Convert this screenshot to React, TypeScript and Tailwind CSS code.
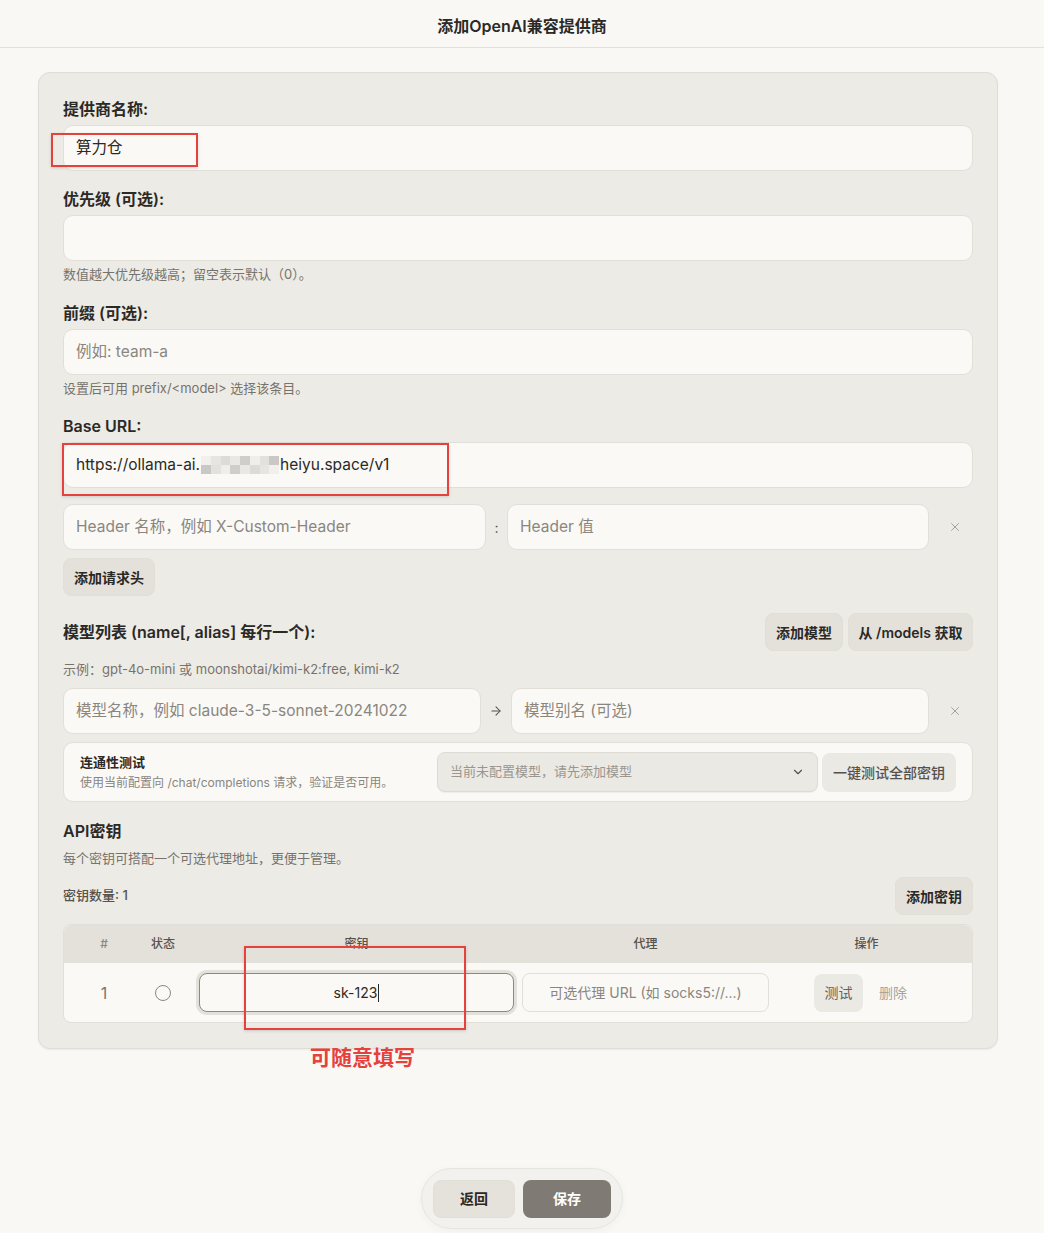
import { ArrowRight, ChevronDown, X } from "lucide-react";
import clsx from "clsx";

const cn = clsx;
const font = "font-['Inter','Noto_Sans_CJK_SC',sans-serif]";

function Label({ children, className }: { children: React.ReactNode; className?: string }) {
  return (
    <div className={cn("text-[16px] leading-[24px] font-semibold text-[#2b2925]", className)}>
      {children}
    </div>
  );
}

function Hint({ children, className }: { children: React.ReactNode; className?: string }) {
  return <div className={cn("text-[13px] leading-[16px] text-[#77736c]", className)}>{children}</div>;
}

function Input({
  value,
  placeholder,
  className,
  children,
}: {
  value?: React.ReactNode;
  placeholder?: string;
  className?: string;
  children?: React.ReactNode;
}) {
  return (
    <div
      className={cn(
        "relative flex h-[46px] items-center rounded-[10px] border border-[#e2dfd9] bg-[#faf9f6] px-[12px] text-[15.5px]",
        className
      )}
    >
      {value ? (
        <span className="text-[#2b2925]">{value}</span>
      ) : (
        <span className="text-[#8a867f]">{placeholder}</span>
      )}
      {children}
    </div>
  );
}

function SoftButton({ children, className }: { children: React.ReactNode; className?: string }) {
  return (
    <button
      className={cn(
        "flex h-[38px] items-center justify-center whitespace-nowrap rounded-[8px] border border-[#e2dfd9] bg-[#e4e1db] text-[14px] font-semibold text-[#2b2925]",
        className
      )}
    >
      {children}
    </button>
  );
}

// red outline used to call out a field
function Callout({ className }: { className: string }) {
  return <div className={cn("pointer-events-none absolute border-2 border-[#e5413d] shadow-[0_1px_3px_rgba(0,0,0,0.15)]", className)} />;
}

function Redacted() {
  const cells = ["#f1f0ed", "#e6e5e2", "#dcdbd8", "#e9e8e5", "#cfcecb", "#efeeeb", "#e2e1de", "#c9c8c5"];
  return (
    <span className="mx-[1px] inline-flex h-[18px] w-[78px] flex-wrap overflow-hidden align-middle">
      {cells.map((c, i) => (
        <span key={i} className="h-[9px] w-[9.75px]" style={{ background: c }} />
      ))}
      {cells
        .slice()
        .reverse()
        .map((c, i) => (
          <span key={"b" + i} className="h-[9px] w-[9.75px]" style={{ background: c }} />
        ))}
    </span>
  );
}

export default function App() {
  return (
    <div className={cn("min-h-[1233px] bg-[#f9f8f5] pb-[150px]", font)}>
      <header className="flex h-[48px] items-center justify-center border-b border-[#e3e1dc] pt-[4px] text-[16px] font-semibold text-[#2b2925]">
        添加OpenAI兼容提供商
      </header>

      <div className="ml-[38px] mt-[24px] w-[960px] rounded-[12px] border border-[#e0ddd7] bg-[#edebe6] px-[24px] pt-[24px] pb-[25px] shadow-[0_1px_2px_rgba(0,0,0,0.06)]">
        <Label>提供商名称:</Label>
        <Input value="算力仓" className="mt-[4px]">
          <Callout className="left-[-13px] top-[7px] h-[34px] w-[147px]" />
        </Input>

        <Label className="mt-[16px]">优先级 (可选):</Label>
        <Input className="mt-[4px]" />
        <Hint className="mt-[5px]">数值越大优先级越高；留空表示默认（0）。</Hint>

        <Label className="mt-[19px]">前缀 (可选):</Label>
        <Input placeholder="例如: team-a" className="mt-[4px]" />
        <Hint className="mt-[5px]">设置后可用 prefix/&lt;model&gt; 选择该条目。</Hint>

        <Label className="mt-[18px]">Base URL:</Label>
        <Input
          className="mt-[4px]"
          value={
            <span className="inline-flex items-center">
              https://ollama-ai.
              <Redacted />
              heiyu.space/v1
            </span>
          }
        >
          <Callout className="left-[-2px] top-[0px] h-[53px] w-[387px]" />
        </Input>

        <div className="mt-[16px] flex items-center">
          <Input placeholder="Header 名称，例如 X-Custom-Header" className="w-[423px]" />
          <span className="w-[21px] text-center text-[14px] text-[#55524d]">:</span>
          <Input placeholder="Header 值" className="w-[422px]" />
          <X className="ml-[19px] text-[#9b978f]" size={14} strokeWidth={1.5} />
        </div>
        <SoftButton className="mt-[8px] w-[92px]">添加请求头</SoftButton>

        <div className="mt-[17px] flex items-center justify-between">
          <Label>模型列表 (name[, alias] 每行一个):</Label>
          <div className="flex gap-[5px]">
            <SoftButton className="w-[78px]">添加模型</SoftButton>
            <SoftButton className="w-[125px]">从 /models 获取</SoftButton>
          </div>
        </div>
        <Hint className="mt-[10px] text-[12.5px]">示例：gpt-4o-mini 或 moonshotai/kimi-k2:free, kimi-k2</Hint>

        <div className="mt-[11px] flex items-center">
          <Input placeholder="模型名称，例如 claude-3-5-sonnet-20241022" className="w-[418px]" />
          <span className="flex w-[30px] justify-center text-[#55524d]">
            <ArrowRight size={14} strokeWidth={1.8} />
          </span>
          <Input placeholder="模型别名 (可选)" className="w-[418px]" />
          <X className="ml-[19px] text-[#9b978f]" size={14} strokeWidth={1.5} />
        </div>

        <div className="mt-[8px] flex h-[60px] items-center rounded-[10px] border border-[#e2dfd9] bg-[#faf9f6] pl-[16px] pr-[16px]">
          <div className="flex-1">
            <div className="text-[13px] leading-[18px] font-semibold text-[#2b2925]">连通性测试</div>
            <div className="mt-[4px] text-[12px] leading-[16px] text-[#8a867f]">
              使用当前配置向 /chat/completions 请求，验证是否可用。
            </div>
          </div>
          <div className="flex h-[40px] w-[381px] items-center justify-between rounded-[8px] border border-[#dedbd5] bg-[#ebe9e4] pl-[12px] pr-[12px] text-[13px] text-[#9a968f] shadow-[0_1px_1px_rgba(0,0,0,0.05)]">
            当前未配置模型，请先添加模型
            <ChevronDown size={14} className="text-[#55524d]" />
          </div>
          <button className="ml-[4px] flex h-[39px] w-[134px] items-center justify-center rounded-[8px] bg-[#ebe9e4] text-[14px] font-medium text-[#55524d]">
            一键测试全部密钥
          </button>
        </div>

        <Label className="mt-[17px]">API密钥</Label>
        <Hint className="mt-[7px]">每个密钥可搭配一个可选代理地址，更便于管理。</Hint>

        <div className="mt-[11px] flex items-center justify-between">
          <span className="text-[13px] font-medium text-[#55524d]">密钥数量: 1</span>
          <SoftButton className="w-[78px]">添加密钥</SoftButton>
        </div>

        <div className="relative mt-[9px] rounded-[8px] border border-[#e2dfd9] bg-[#faf9f6]">
          <div className="flex h-[38px] items-center rounded-t-[8px] bg-[#e4e1db] text-[12px] font-medium text-[#55524d]">
            <span className="w-[80px] text-center text-[#8a867f]">#</span>
            <span className="w-[38px] text-center">状态</span>
            <span className="w-[340px] pl-[17px] pr-[8px] text-center">密钥</span>
            <span className="w-[255px] pr-[8px] text-center">代理</span>
            <span className="flex-1 pr-[16px] text-center">操作</span>
          </div>
          <div className="flex h-[59px] items-center">
            <span className="w-[80px] text-center text-[16px] text-[#77736c]">1</span>
            <span className="flex w-[38px] justify-center">
              <span className="h-[16px] w-[16px] rounded-full border-[1.5px] border-[#8c8882]" />
            </span>
            <div className="w-[340px] pl-[17px] pr-[8px]">
              <div className="flex h-[39px] items-center justify-center rounded-[8px] border border-[#8c8882] bg-[#faf9f6] text-[14px] text-[#2b2925] ring-[3px] ring-[#e4e1db]">
                sk-123
                <span className="ml-[1px] h-[18px] w-[1px] bg-[#2b2925]" />
              </div>
            </div>
            <div className="w-[255px] pr-[8px]">
              <div className="flex h-[39px] items-center justify-center rounded-[8px] border border-[#e2dfd9] bg-[#faf9f6] text-[14px] text-[#8a867f]">
                可选代理 URL (如 socks5://...)
              </div>
            </div>
            <div className="flex flex-1 items-center justify-center gap-[16px] pr-[28px]">
              <button className="flex h-[38px] w-[49px] items-center justify-center rounded-[8px] bg-[#ebe9e4] text-[14px] text-[#66625c]">
                测试
              </button>
              <span className="text-[14px] text-[#a8a49d]">删除</span>
            </div>
          </div>

          <Callout className="left-[180px] top-[21px] h-[84px] w-[222px]" />
          <div className="absolute left-[246px] top-[117px] whitespace-nowrap text-[21px] font-bold text-[#e5413d]">可随意填写</div>
        </div>
      </div>

      <div className="fixed bottom-[4px] left-1/2 flex h-[61px] -translate-x-1/2 items-center gap-[8px] rounded-full border border-[#e6e4df] bg-[#f2f1ed] px-[11px] shadow-[0_2px_8px_rgba(0,0,0,0.04)]">
        <button className="h-[38px] w-[82px] rounded-[8px] border border-[#e2dfd9] bg-[#e5e2dc] text-[14px] font-semibold text-[#2b2925]">
          返回
        </button>
        <button className="h-[38px] w-[88px] rounded-[8px] bg-[#7f7b74] text-[14px] font-semibold text-white">
          保存
        </button>
      </div>
    </div>
  );
}
